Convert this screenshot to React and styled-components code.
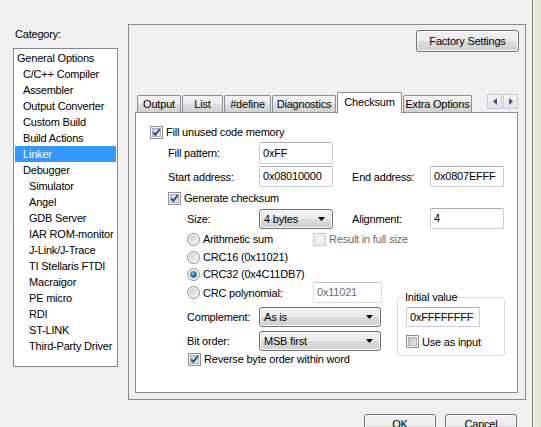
import React from 'react';
import styled, { createGlobalStyle } from 'styled-components';

const GlobalStyle = createGlobalStyle`
  html, body {
    margin: 0;
    padding: 0;
    background: #f0f0f0;
  }
  body {
    font-family: "Liberation Sans", Arial, sans-serif;
    font-size: 11px;
    letter-spacing: -0.2px;
    color: #000;
  }
`;

const Screen = styled.div`
  width: 541px;
  height: 427px;
  overflow: hidden;
  display: flex;
  background: #f0f0f0;
`;

const DialogBody = styled.div`
  width: 532px;
  flex-shrink: 0;
  display: flex;
  flex-direction: column;
`;

const FrameEdge = styled.div`
  flex: 1;
  border-left: 1px solid #767b80;
  box-shadow: inset 1px 0 0 #f4f6ee;
  background: linear-gradient(to right, #e9eedd, #dfe6cd);
`;

const MainRow = styled.div`
  display: flex;
  align-items: flex-start;
  height: 400px;
`;

/* ---------- category tree ---------- */

const Sidebar = styled.div`
  width: 105px;
  flex-shrink: 0;
  margin-left: 13px;
  padding-top: 26px;
`;

const CategoryLabel = styled.div`
  height: 16px;
  line-height: 16px;
  padding-left: 2px;
`;

const CategoryList = styled.ul`
  box-sizing: border-box;
  height: 319px;
  margin: 6px 0 0;
  padding: 1px;
  list-style: none;
  background: #fff;
  border: 1px solid #828790;
`;

const CategoryItem = styled.li`
  height: 16px;
  line-height: 16px;
  white-space: nowrap;
  padding-left: ${p => 2 + p.$level * 6}px;
  background: ${p => (p.$selected ? '#3399ff' : 'transparent')};
  color: ${p => (p.$selected ? '#fff' : '#000')};
`;

/* ---------- buttons ---------- */

const PushButton = styled.button`
  box-sizing: border-box;
  width: ${p => p.$w}px;
  height: ${p => p.$h || 22}px;
  padding: 0 0 ${p => p.$lift || 0}px;
  border: 1px solid #707070;
  border-radius: 3px;
  background: linear-gradient(#f2f2f2 0%, #ebebeb 50%, #dddddd 51%, #cfcfcf 100%);
  box-shadow: inset 0 0 0 1px #fbfbfb;
  font: inherit;
  letter-spacing: inherit;
  color: #000;
`;

const FactoryButton = styled(PushButton)`
  align-self: flex-end;
  margin: 5px 6px 0 0;
`;

const ButtonRow = styled.div`
  display: flex;
  justify-content: flex-end;
  gap: 9px;
  margin-top: 14px;
  padding-right: 15px;
`;

/* ---------- options panel and tabs ---------- */

const OptionsPanel = styled.div`
  box-sizing: border-box;
  width: 398px;
  height: 376px;
  margin: 24px 0 0 10px;
  border: 1px solid #8a8a8a;
  display: flex;
  flex-direction: column;
`;

const TabWidget = styled.div`
  margin: 40px 7px 0 6px;
  display: flex;
  flex-direction: column;
`;

const TabStrip = styled.div`
  position: relative;
  z-index: 1;
  height: 20px;
  display: flex;
  align-items: flex-end;
  padding-left: 2px;
`;

const Tab = styled.div`
  box-sizing: border-box;
  width: ${p => p.$w}px;
  height: ${p => (p.$active ? 21 : 17)}px;
  margin-right: 1px;
  margin-bottom: ${p => (p.$active ? -1 : 0)}px;
  border: 1px solid #898c95;
  border-bottom: none;
  border-radius: 2px 2px 0 0;
  background: ${p =>
    p.$active ? '#fff' : 'linear-gradient(#f3f3f3 0%, #ebebeb 50%, #dedede 51%, #d2d2d2 100%)'};
  line-height: ${p => (p.$active ? 18 : 16)}px;
  text-align: center;
  white-space: nowrap;
  overflow: hidden;
`;

const ScrollArrows = styled.div`
  display: flex;
  gap: 1px;
  margin-left: auto;
  align-self: flex-start;
  margin-top: 2px;
`;

const ArrowButton = styled.div`
  box-sizing: border-box;
  width: 15px;
  height: 15px;
  display: flex;
  align-items: center;
  justify-content: center;
  border: 1px solid #c6c9ce;
  background: linear-gradient(#f6f6f6, #e2e3e5);
`;

const TabPane = styled.div`
  box-sizing: border-box;
  height: 281px;
  padding: 11px 0 0 14px;
  background: #fff;
  border: 1px solid #898c95;
`;

/* ---------- form controls ---------- */

const CheckRow = styled.label`
  display: flex;
  align-items: center;
  gap: 3px;
  height: ${p => p.$h || 16}px;
  margin: ${p => p.$mt || 0}px 0 0 ${p => p.$ml || 0}px;
  color: ${p => (p.$disabled ? '#6d6d6d' : '#000')};
  white-space: nowrap;
  svg {
    flex-shrink: 0;
  }
`;

const RadioOption = styled(CheckRow)`
  width: ${p => p.$w || 195}px;
  flex-shrink: 0;
`;

const FieldRow = styled.div`
  display: flex;
  align-items: center;
  height: ${p => p.$h}px;
  margin: ${p => p.$mt || 0}px 0 0 ${p => p.$ml || 0}px;
`;

const FieldLabel = styled.span`
  width: ${p => p.$w}px;
  flex-shrink: 0;
  margin-left: ${p => p.$ml || 0}px;
  white-space: nowrap;
`;

const TextBox = styled.div`
  box-sizing: border-box;
  width: ${p => p.$w}px;
  height: ${p => p.$h}px;
  flex-shrink: 0;
  margin-top: ${p => p.$mt || 0}px;
  padding-left: 3px;
  line-height: ${p => p.$h - 2}px;
  background: #fff;
  border: 1px solid ${p => (p.$disabled ? '#d9dbdf' : '#c9cdd3')};
  border-top-color: ${p => (p.$disabled ? '#c6c8cc' : '#abadb3')};
  border-radius: 2px;
  color: ${p => (p.$disabled ? '#6d6d6d' : '#000')};
`;

const Combo = styled.div`
  box-sizing: border-box;
  width: ${p => p.$w}px;
  height: ${p => p.$h}px;
  flex-shrink: 0;
  display: flex;
  align-items: center;
  justify-content: space-between;
  padding: 0 7px 0 4px;
  border: 1px solid #707070;
  border-radius: 3px;
  background: linear-gradient(#f2f2f2 0%, #ebebeb 50%, #dddddd 51%, #cfcfcf 100%);
  box-shadow: inset 0 0 0 1px #fbfbfb;
`;

const LowerArea = styled.div`
  display: flex;
  align-items: flex-start;
  margin: 2px 0 0 37px;
`;

const ChoiceColumn = styled.div`
  width: 195px;
  flex-shrink: 0;
  display: flex;
  flex-direction: column;
`;

const GroupBox = styled.fieldset`
  box-sizing: border-box;
  width: 108px;
  min-width: 0;
  margin: 59px 0 0 15px;
  padding: 0 8px 6px;
  border: 1px solid #d5dfe5;
  border-radius: 3px;
`;

const GroupTitle = styled.legend`
  padding: 0 1px;
  margin-left: -2px;
  line-height: 14px;
`;

/* ---------- drawn glyphs ---------- */

const SharedDefs = () => (
  <svg width="0" height="0" style={{ position: 'absolute' }}>
    <defs>
      <linearGradient id="boxFill" x1="0" y1="0" x2="1" y2="1">
        <stop offset="0" stopColor="#b9c0c9" />
        <stop offset="1" stopColor="#eef0f3" />
      </linearGradient>
      <linearGradient id="boxFillChecked" x1="0" y1="0" x2="1" y2="1">
        <stop offset="0" stopColor="#c2cde0" />
        <stop offset="1" stopColor="#eef2f8" />
      </linearGradient>
      <linearGradient id="radioFill" x1="0" y1="0" x2="1" y2="1">
        <stop offset="0" stopColor="#c8cacd" />
        <stop offset="1" stopColor="#f7f7f7" />
      </linearGradient>
      <radialGradient id="radioDot" cx="0.4" cy="0.35" r="0.7">
        <stop offset="0" stopColor="#8ed0ff" />
        <stop offset="0.5" stopColor="#1f7ac8" />
        <stop offset="1" stopColor="#0b3f7a" />
      </radialGradient>
    </defs>
  </svg>
);

const CheckBox = ({ checked, disabled }) => (
  <svg width="13" height="13" viewBox="0 0 13 13">
    <rect x="0.5" y="0.5" width="12" height="12" fill="#f6f6f6" stroke={disabled ? '#c5c5c5' : '#8e8f8f'} />
    <rect
      x="2.5"
      y="2.5"
      width="8"
      height="8"
      fill={disabled ? '#f2f2f2' : checked ? 'url(#boxFillChecked)' : 'url(#boxFill)'}
      stroke={disabled ? '#e0e0e0' : '#aab0b8'}
    />
    {checked && (
      <path d="M3.2 6.3 L5.4 8.8 L9.8 3.2" fill="none" stroke="#2e4b8f" strokeWidth="1.9" />
    )}
  </svg>
);

const Radio = ({ checked }) => (
  <svg width="13" height="13" viewBox="0 0 13 13">
    <circle cx="6.5" cy="6.5" r="6" fill="#f4f4f4" stroke="#8e8f8f" />
    <circle cx="6.5" cy="6.5" r="4.3" fill="url(#radioFill)" />
    {checked && <circle cx="6.5" cy="6.5" r="3.2" fill="url(#radioDot)" />}
  </svg>
);

const DropArrow = () => (
  <svg width="7" height="4" viewBox="0 0 7 4">
    <polygon points="0,0 7,0 3.5,4" fill="#000" />
  </svg>
);

const SideArrow = ({ dir }) => (
  <svg width="4" height="7" viewBox="0 0 4 7">
    <polygon points={dir === 'left' ? '4,0 4,7 0,3.5' : '0,0 0,7 4,3.5'} fill="#3a5a8f" />
  </svg>
);

const categories = [
  ['General Options', 0],
  ['C/C++ Compiler', 1],
  ['Assembler', 1],
  ['Output Converter', 1],
  ['Custom Build', 1],
  ['Build Actions', 1],
  ['Linker', 1],
  ['Debugger', 1],
  ['Simulator', 2],
  ['Angel', 2],
  ['GDB Server', 2],
  ['IAR ROM-monitor', 2],
  ['J-Link/J-Trace', 2],
  ['TI Stellaris FTDI', 2],
  ['Macraigor', 2],
  ['PE micro', 2],
  ['RDI', 2],
  ['ST-LINK', 2],
  ['Third-Party Driver', 2],
];

const tabs = [
  ['Output', 44],
  ['List', 41],
  ['#define', 47],
  ['Diagnostics', 64],
  ['Checksum', 65, true],
  ['Extra Options', 69],
];

const App = () => (
  <Screen>
    <GlobalStyle />
    <SharedDefs />
    <DialogBody>
      <MainRow>
        <Sidebar>
          <CategoryLabel>Category:</CategoryLabel>
          <CategoryList>
            {categories.map(([name, level]) => (
              <CategoryItem key={name} $level={level} $selected={name === 'Linker'}>
                {name}
              </CategoryItem>
            ))}
          </CategoryList>
        </Sidebar>

        <OptionsPanel>
          <FactoryButton $w={103} $h={22}>Factory Settings</FactoryButton>
          <TabWidget>
            <TabStrip>
              {tabs.map(([name, w, active]) => (
                <Tab key={name} $w={w} $active={active}>
                  {name}
                </Tab>
              ))}
              <ScrollArrows>
                <ArrowButton><SideArrow dir="left" /></ArrowButton>
                <ArrowButton><SideArrow dir="right" /></ArrowButton>
              </ScrollArrows>
            </TabStrip>

            <TabPane>
              <CheckRow>
                <CheckBox checked />
                Fill unused code memory
              </CheckRow>

              <FieldRow $h={22} $mt={2} $ml={18}>
                <FieldLabel $w={91}>Fill pattern:</FieldLabel>
                <TextBox $w={74} $h={22}>0xFF</TextBox>
              </FieldRow>

              <FieldRow $h={21} $mt={2} $ml={18}>
                <FieldLabel $w={91}>Start address:</FieldLabel>
                <TextBox $w={74} $h={21}>0x08010000</TextBox>
                <FieldLabel $w={78} $ml={19}>End address:</FieldLabel>
                <TextBox $w={74} $h={21}>0x0807EFFF</TextBox>
              </FieldRow>

              <CheckRow $mt={3} $ml={18}>
                <CheckBox checked />
                Generate checksum
              </CheckRow>

              <FieldRow $h={21} $mt={2} $ml={37}>
                <FieldLabel $w={72}>Size:</FieldLabel>
                <Combo $w={74} $h={20}>
                  4 bytes
                  <DropArrow />
                </Combo>
                <FieldLabel $w={78} $ml={19}>Alignment:</FieldLabel>
                <TextBox $w={74} $h={21}>4</TextBox>
              </FieldRow>

              <LowerArea>
                <ChoiceColumn>
                  <FieldRow $h={16}>
                    <RadioOption $w={126}>
                      <Radio />
                      Arithmetic sum
                    </RadioOption>
                    <CheckRow $disabled>
                      <CheckBox disabled />
                      Result in full size
                    </CheckRow>
                  </FieldRow>
                  <RadioOption $mt={2}>
                    <Radio />
                    CRC16 (0x11021)
                  </RadioOption>
                  <RadioOption $mt={1}>
                    <Radio checked />
                    CRC32 (0x4C11DB7)
                  </RadioOption>
                  <FieldRow $h={21}>
                    <RadioOption $w={126}>
                      <Radio />
                      CRC polynomial:
                    </RadioOption>
                    <TextBox $w={69} $h={21} $disabled>0x11021</TextBox>
                  </FieldRow>
                  <FieldRow $h={20} $mt={4}>
                    <FieldLabel $w={72}>Complement:</FieldLabel>
                    <Combo $w={122} $h={20}>
                      As is
                      <DropArrow />
                    </Combo>
                  </FieldRow>
                  <FieldRow $h={20} $mt={4}>
                    <FieldLabel $w={72}>Bit order:</FieldLabel>
                    <Combo $w={122} $h={20}>
                      MSB first
                      <DropArrow />
                    </Combo>
                  </FieldRow>
                  <CheckRow $h={14} $mt={1} $ml={1}>
                    <CheckBox checked />
                    Reverse byte order within word
                  </CheckRow>
                </ChoiceColumn>

                <GroupBox>
                  <GroupTitle>Initial value</GroupTitle>
                  <TextBox $w={74} $h={20} $mt={3}>0xFFFFFFFF</TextBox>
                  <CheckRow $h={15} $mt={7}>
                    <CheckBox />
                    Use as input
                  </CheckRow>
                </GroupBox>
              </LowerArea>
            </TabPane>
          </TabWidget>
        </OptionsPanel>
      </MainRow>

      <ButtonRow>
        <PushButton $w={72} $h={23} $lift={3}>OK</PushButton>
        <PushButton $w={72} $h={23} $lift={3}>Cancel</PushButton>
      </ButtonRow>
    </DialogBody>
    <FrameEdge />
  </Screen>
);

export default App;
